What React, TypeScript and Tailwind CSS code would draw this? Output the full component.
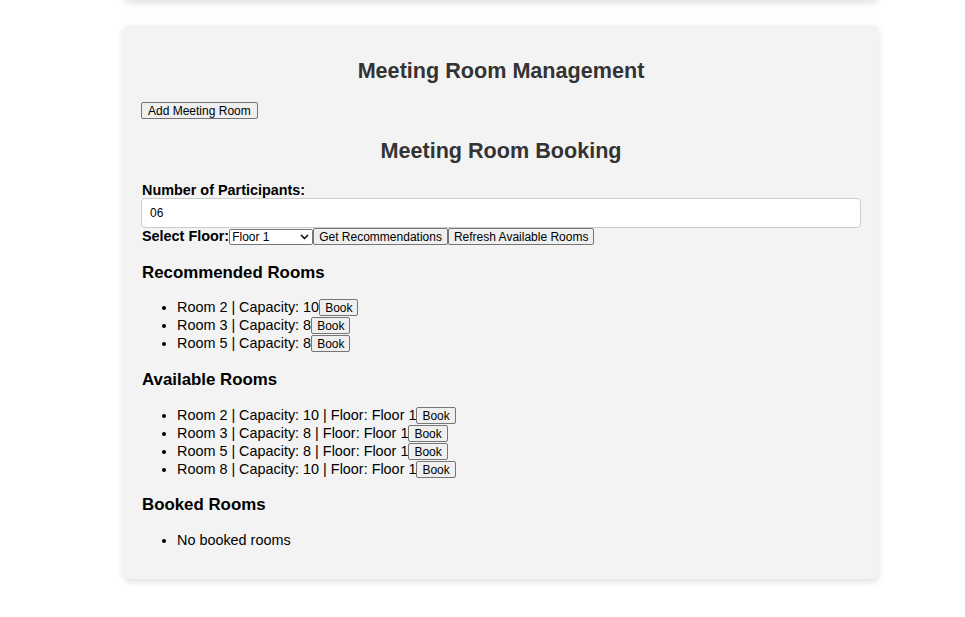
import React from "react";

const btn =
  "bg-[#efefef] border border-[#767676] rounded-[2px] px-[5px] h-[17px] text-[12px] leading-[14px] text-black";

function Book() {
  return <button className={btn + " align-top mt-[1px]"}>Book</button>;
}

export default function App() {
  const rec = ["Room 2 | Capacity: 10", "Room 3 | Capacity: 8", "Room 5 | Capacity: 8"];
  const avail = [
    "Room 2 | Capacity: 10 | Floor: Floor 1",
    "Room 3 | Capacity: 8 | Floor: Floor 1",
    "Room 5 | Capacity: 8 | Floor: Floor 1",
    "Room 8 | Capacity: 10 | Floor: Floor 1",
  ];
  return (
    <div
      className="min-h-[617px] bg-white text-black"
      style={{ fontFamily: '"Liberation Sans", Arial, sans-serif' }}
    >
      <div className="ml-[123px] w-[756px] h-[20px] mt-[-20px] rounded-[8px] bg-[#f3f3f3] shadow-[0_3px_7px_rgba(0,0,0,0.12)]" />
      <div className="ml-[123px] mt-[25px] w-[756px] rounded-[8px] bg-[#f3f3f3] shadow-[0_3px_7px_rgba(0,0,0,0.12)] px-[18px] pt-[16px] pb-[16px]">
        <h2 className="text-center text-[21.6px] font-bold text-[#333] leading-[25px] mt-[17px] mb-[19px]">
          Meeting Room Management
        </h2>
        <button className={btn + " px-[6px] align-top"}>Add Meeting Room</button>
        <h2 className="text-center text-[21.6px] font-bold text-[#333] leading-[25px] mt-[12px] mb-[19px]">
          Meeting Room Booking
        </h2>
        <div className="text-[14.4px] font-bold leading-[16px] pl-[1px]">Number of Participants:</div>
        <div className="h-[30px] bg-white border border-[#cccccc] rounded-[4px] flex items-center px-[8px] text-[12px]">
          06
        </div>
        <div className="flex items-center h-[17px] mt-[0px]">
          <span className="text-[14.4px] font-bold leading-[17px] pl-[1px]">Select Floor:</span>
          <div className="w-[84px] h-[16px] bg-white border border-[#767676] rounded-[2px] flex items-center justify-between pl-[2px] pr-[3px] text-[12px]">
            <span>Floor 1</span>
            <svg width="9" height="6" viewBox="0 0 9 6">
              <path d="M1 1l3.5 3.5L8 1" fill="none" stroke="#000" strokeWidth="1.5" />
            </svg>
          </div>
          <button className={btn}>Get Recommendations</button>
          <button className={btn}>Refresh Available Rooms</button>
        </div>

        <h3 className="text-[16.85px] font-bold leading-[19px] mt-[18px] mb-[16px] pl-[1px]">Recommended Rooms</h3>
        <ul className="list-disc pl-[36px] text-[14.4px] leading-[18px]">
          {rec.map((r) => (
            <li key={r} className="h-[18px]">
              {r}
              <Book />
            </li>
          ))}
        </ul>

        <h3 className="text-[16.85px] font-bold leading-[19px] mt-[18px] mb-[17px] pl-[1px]">Available Rooms</h3>
        <ul className="list-disc pl-[36px] text-[14.4px] leading-[18px]">
          {avail.map((r) => (
            <li key={r} className="h-[18px]">
              {r}
              <Book />
            </li>
          ))}
        </ul>

        <h3 className="text-[16.85px] font-bold leading-[19px] mt-[17px] mb-[18px] pl-[1px]">Booked Rooms</h3>
        <ul className="list-disc pl-[36px] text-[14.4px] leading-[17px] mb-[14px]">
          <li>No booked rooms</li>
        </ul>
      </div>
    </div>
  );
}
